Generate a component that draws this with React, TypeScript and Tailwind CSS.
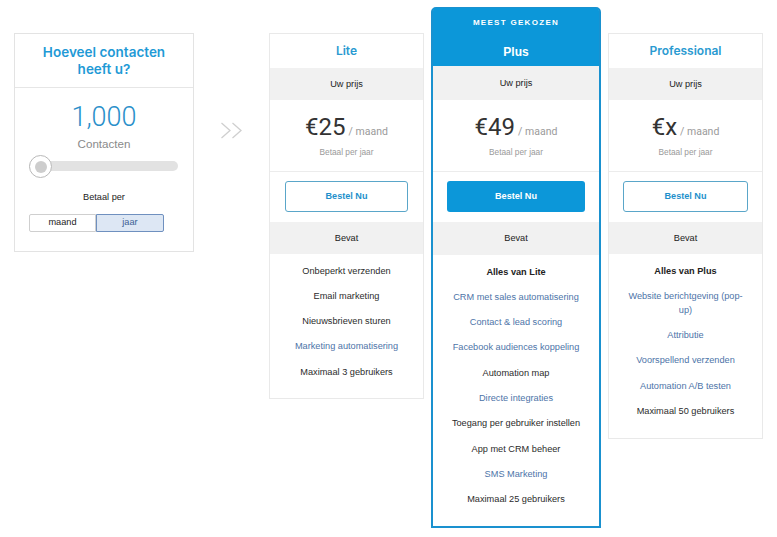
import React from "react";

type Feature = { text: string; kind?: "bold" | "link" };

const ARIAL = "font-['Liberation_Sans',Arial,sans-serif]";
const ROBOTO = "font-['Roboto','Liberation_Sans',sans-serif]";
const TITLE = "font-['Inter','Liberation_Sans',sans-serif]";

function FeatureList({ items }: { items: Feature[] }) {
  return (
    <div className="flex flex-col pt-[4px] px-[16px]">
      {items.map((f, i) => (
        <div
          key={i}
          className={`py-[5.65px] text-center text-[9.2px] leading-[14px] ${
            f.kind === "bold"
              ? "font-bold text-[#222]"
              : f.kind === "link"
              ? "text-[#4d74a8]"
              : "text-[#2b2b2b]"
          }`}
        >
          {f.text}
        </div>
      ))}
    </div>
  );
}

function PriceBlock({ price, featured }: { price: string; featured?: boolean }) {
  return (
    <>
      <div
        className={`${featured ? "h-[34px]" : "h-[32px]"} pt-[2px] bg-[#f1f1f1] flex items-center justify-center text-[9.2px] text-[#222]`}
      >
        Uw prijs
      </div>
      <div className="h-[72px] border-b border-[#ececec] flex flex-col items-center">
        <div className="mt-[13px] h-[28px] flex items-baseline">
          <span className={`${ROBOTO} text-[24px] leading-[28px] text-[#333]`}>{price}</span>
          <span className={`${ROBOTO} text-[10.5px] text-[#9a9a9a] ml-[3px]`}>/ maand</span>
        </div>
        <div className="mt-[6px] text-[8.3px] leading-[11px] text-[#9a9a9a]">Betaal per jaar</div>
      </div>
    </>
  );
}

function Card({
  title,
  price,
  features,
  mx,
}: {
  title: string;
  price: string;
  features: Feature[];
  mx: string;
}) {
  return (
    <div className="mt-[26px] w-[155px] border border-[#e9e9e9] bg-white flex flex-col pb-[14px]">
      <div className={`${TITLE} h-[34px] flex items-center justify-center text-[12px] font-semibold text-[#2a9ad1]`}>
        {title}
      </div>
      <PriceBlock price={price} />
      <div className="h-[50px] flex flex-col">
        <div
          className={`${mx} mt-[9px] h-[31px] border border-[#5aa6c9] rounded-[3px] flex items-center justify-center text-[9.1px] font-bold text-[#1e8fcb]`}
        >
          Bestel Nu
        </div>
      </div>
      <div className="h-[32px] pt-[1px] bg-[#f1f1f1] flex items-center justify-center text-[9.2px] text-[#222]">Bevat</div>
      <FeatureList items={features} />
    </div>
  );
}

export default function App() {
  const lite: Feature[] = [
    { text: "Onbeperkt verzenden" },
    { text: "Email marketing" },
    { text: "Nieuwsbrieven sturen" },
    { text: "Marketing automatisering", kind: "link" },
    { text: "Maximaal 3 gebruikers" },
  ];
  const plus: Feature[] = [
    { text: "Alles van Lite", kind: "bold" },
    { text: "CRM met sales automatisering", kind: "link" },
    { text: "Contact & lead scoring", kind: "link" },
    { text: "Facebook audiences koppeling", kind: "link" },
    { text: "Automation map" },
    { text: "Directe integraties", kind: "link" },
    { text: "Toegang per gebruiker instellen" },
    { text: "App met CRM beheer" },
    { text: "SMS Marketing", kind: "link" },
    { text: "Maximaal 25 gebruikers" },
  ];
  const pro: Feature[] = [
    { text: "Alles van Plus", kind: "bold" },
    { text: "Website berichtgeving (pop-up)", kind: "link" },
    { text: "Attributie", kind: "link" },
    { text: "Voorspellend verzenden", kind: "link" },
    { text: "Automation A/B testen", kind: "link" },
    { text: "Maximaal 50 gebruikers" },
  ];

  return (
    <div className={`${ARIAL} w-[777px] h-[537px] bg-white flex items-start pl-[14px] pt-[7px] overflow-hidden`}>
      {/* Left calculator card */}
      <div className="mt-[26px] w-[180px] h-[219px] border border-[#e3e3e3] bg-white flex flex-col">
        <div
          className={`${TITLE} h-[54px] pt-[1px] border-b border-[#e6e6e6] flex items-center justify-center text-center text-[13.5px] leading-[17px] font-semibold text-[#1f9ad6]`}
        >
          Hoeveel contacten
          <br />
          heeft u?
        </div>
        <div className={`${ROBOTO} mt-[14px] h-[30px] text-center text-[27px] leading-[30px] font-light text-[#2a8fca]`}>
          1,000
        </div>
        <div className="mt-[5px] text-center text-[11.6px] leading-[14px] text-[#8a8a8a]">Contacten</div>
        <div className="mt-[3px] ml-[14px] mr-[15px] h-[24px] relative flex items-center">
          <div className="w-full h-[10px] rounded-full bg-[#e2e2e2]" />
          <div className="absolute left-0 top-[1px] w-[23px] h-[23px] rounded-full border border-[#b9b9b9] bg-white flex items-center justify-center">
            <div className="w-[12px] h-[12px] rounded-full bg-[#cdcdcd]" />
          </div>
        </div>
        <div className="mt-[13px] text-center text-[9.2px] leading-[12px] text-[#222]">Betaal per</div>
        <div className="mt-[11px] ml-[14px] w-[135px] h-[18px] flex text-[9.2px]">
          <div className="w-[67px] h-full border border-[#cfcfcf] rounded-l-[2px] flex items-center justify-center text-[#222]">
            maand
          </div>
          <div className="w-[68px] h-full border border-[#6f90bf] bg-[#dde7f4] rounded-r-[2px] flex items-center justify-center text-[#3c5f95]">
            jaar
          </div>
        </div>
      </div>

      {/* Arrow */}
      <div className="w-[75px] mt-[115px] flex justify-center">
        <svg width="24" height="17" viewBox="0 0 24 17" fill="none" stroke="#cfcfcf" strokeWidth="1.3">
          <path d="M1.5 1 L10 8.5 L1.5 16" />
          <path d="M12.5 1 L21 8.5 L12.5 16" />
        </svg>
      </div>

      <Card title="Lite" price="€25" features={lite} mx="mx-[15px]" />

      {/* Plus card */}
      <div className="ml-[7px] w-[170px] border-2 border-[#1a91cf] rounded-t-[5px] bg-white flex flex-col pb-[14px]">
        <div className="h-[58px] bg-[#0c97d9] flex flex-col items-center -mt-px rounded-t-[3px]">
          <div className="mt-[10px] h-[10px] text-[8px] leading-[10px] font-bold tracking-[1.3px] text-white">
            MEEST GEKOZEN
          </div>
          <div className="mt-[16px] h-[16px] text-[12px] leading-[16px] font-bold text-white">Plus</div>
        </div>
        <PriceBlock price="€49" featured />
        <div className="h-[50px] flex flex-col">
          <div className="mx-[14px] mt-[9px] h-[31px] bg-[#0c97d9] rounded-[3px] flex items-center justify-center text-[9.1px] font-bold text-white">
            Bestel Nu
          </div>
        </div>
        <div className="h-[33px] pt-[1px] bg-[#f1f1f1] flex items-center justify-center text-[9.2px] text-[#222]">Bevat</div>
        <FeatureList items={plus} />
      </div>

      <div className="ml-[7px]">
        <Card title="Professional" price="€x" features={pro} mx="mx-[14px]" />
      </div>
    </div>
  );
}
